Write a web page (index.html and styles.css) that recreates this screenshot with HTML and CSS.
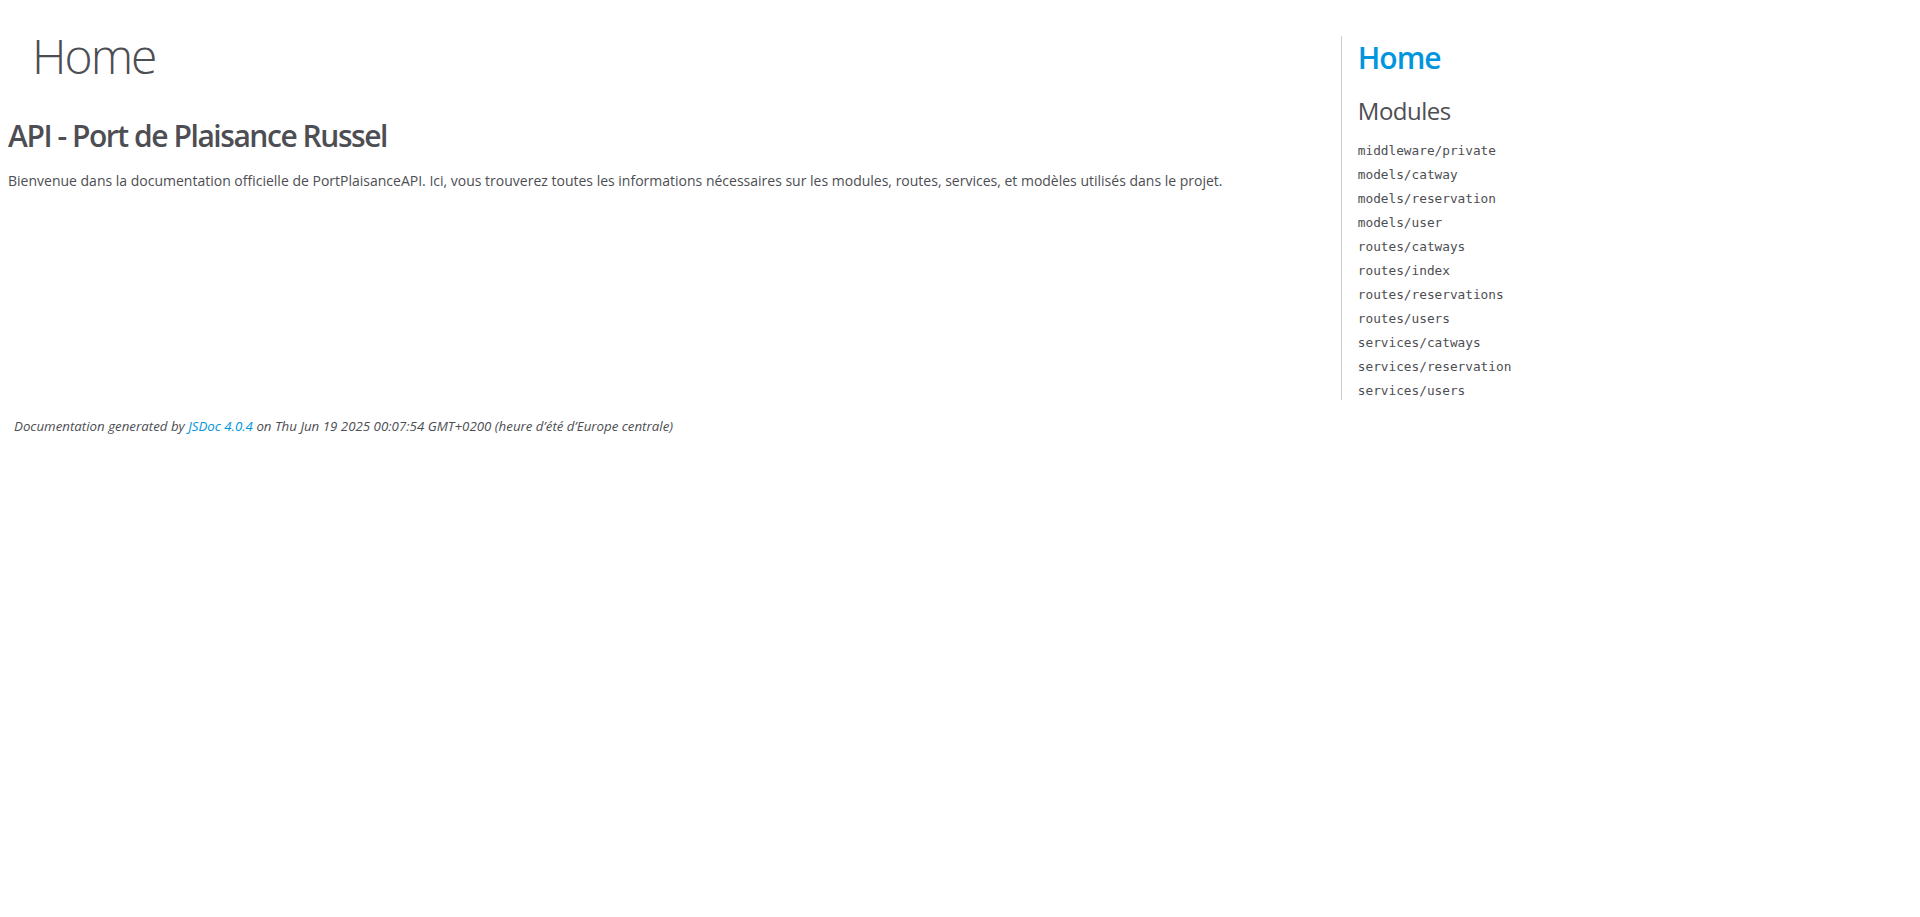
FILE: index.html
```html
<!DOCTYPE html>
<html lang="fr">
<head>
<meta charset="utf-8">
<title>JSDoc: Home</title>
<link rel="stylesheet" href="styles.css">
</head>
<body>
<div class="layout">
  <div id="main">
    <h1 class="page-title">Home</h1>
    <section class="readme">
      <article>
        <h1>API - Port de Plaisance Russel</h1>
        <p>Bienvenue dans la documentation officielle de PortPlaisanceAPI. Ici, vous trouverez toutes les informations nécessaires sur les modules, routes, services, et modèles utilisés dans le projet.</p>
      </article>
    </section>
  </div>
  <nav>
    <h2><a href="#">Home</a></h2>
    <h3>Modules</h3>
    <ul>
      <li><a href="#">middleware/private</a></li>
      <li><a href="#">models/catway</a></li>
      <li><a href="#">models/reservation</a></li>
      <li><a href="#">models/user</a></li>
      <li><a href="#">routes/catways</a></li>
      <li><a href="#">routes/index</a></li>
      <li><a href="#">routes/reservations</a></li>
      <li><a href="#">routes/users</a></li>
      <li><a href="#">services/catways</a></li>
      <li><a href="#">services/reservation</a></li>
      <li><a href="#">services/users</a></li>
    </ul>
  </nav>
</div>
<footer>
  Documentation generated by <a href="#">JSDoc 4.0.4</a> on Thu Jun 19 2025 00:07:54 GMT+0200 (heure d’été d’Europe centrale)
</footer>
</body>
</html>
```
FILE: styles.css
```css
body {
  margin: 8px;
  font-family: "Open Sans", "Liberation Sans", sans-serif;
  font-size: 14px;
  color: #4d4e53;
  background: #fff;
}
a {
  color: #0095dd;
  text-decoration: none;
}
.layout {
  display: flex;
  align-items: flex-start;
}
#main {
  width: 70%;
}
h1, h2, h3 {
  margin: 0;
}
.page-title {
  font-size: 48px;
  font-weight: 300;
  letter-spacing: -2px;
  margin: 12px 24px 23px;
  line-height: 1.5;
}
.readme h1 {
  font-size: 30px;
  font-weight: 600;
  letter-spacing: -1.45px;
  margin: 0 0 15px;
}
.readme p {
  margin: 15px 0;
}
nav {
  width: 30%;
  box-sizing: border-box;
  margin-top: 28px;
  border-left: 1px solid #ccc;
  padding-left: 16px;
}
nav h2 {
  font-size: 30px;
  font-weight: 600;
  letter-spacing: -1px;
  margin: 1px 0 16px;
}
nav h3 {
  font-size: 24px;
  font-weight: 400;
  letter-spacing: -0.5px;
  margin: 0 0 14.5px;
}
nav ul {
  list-style: none;
  margin: 0;
  padding: 0;
}
nav li {
  margin-top: 6px;
  font-family: "DejaVu Sans Mono", monospace;
  font-size: 12.75px;
  line-height: 18px;
}
nav ul a {
  color: #4d4e53;
}
footer {
  padding: 6px;
  margin-top: 11px;
  font-style: italic;
  font-size: 13.3px;
}
```
